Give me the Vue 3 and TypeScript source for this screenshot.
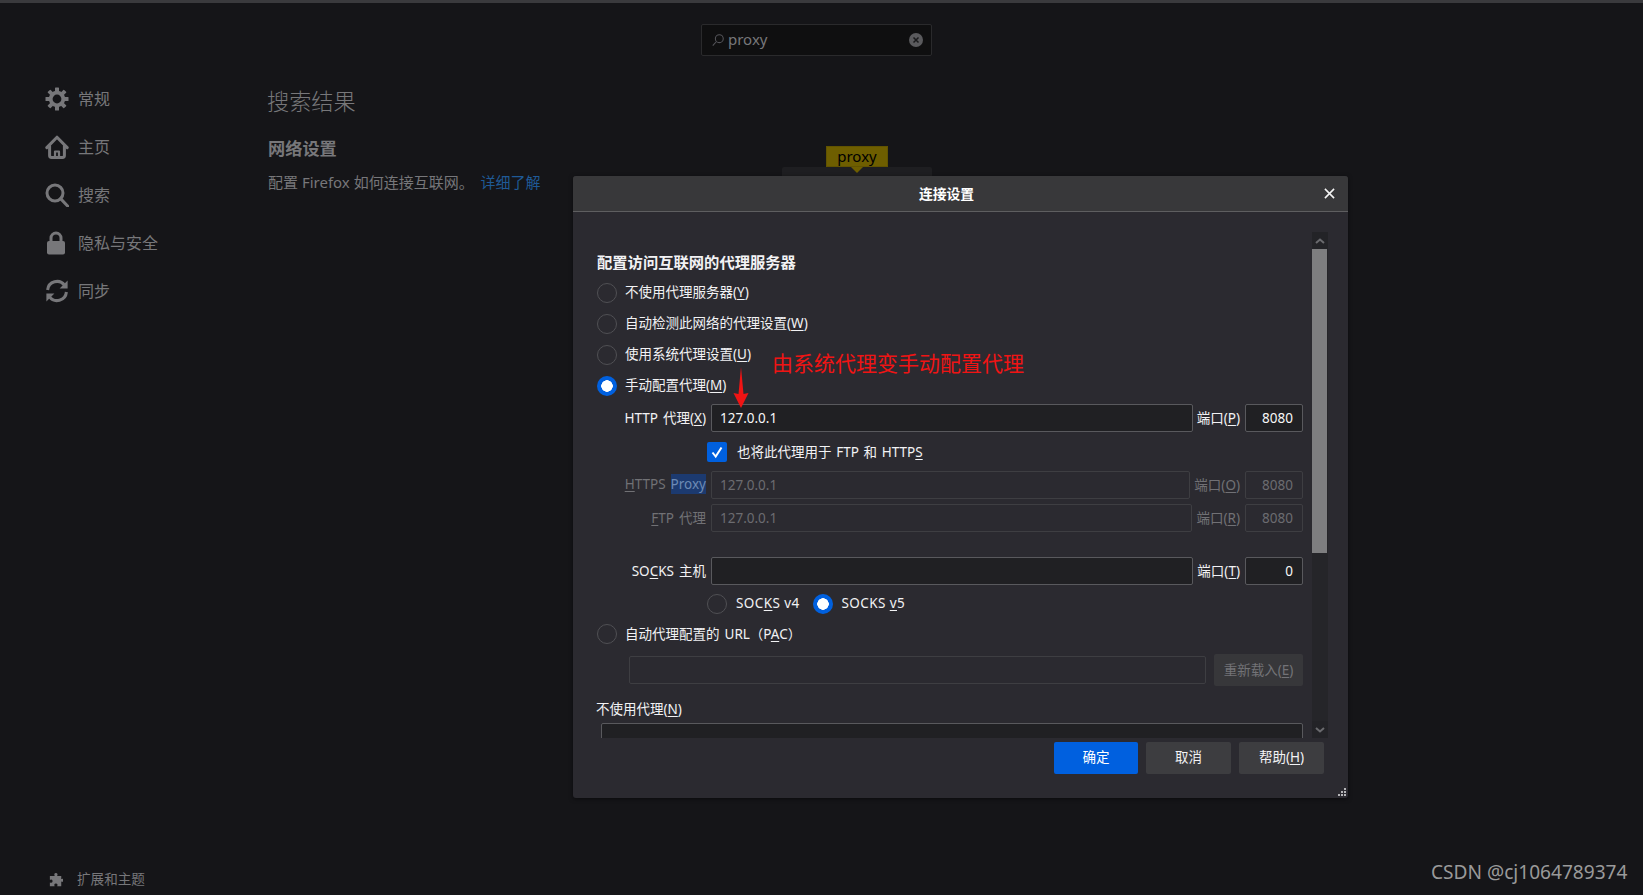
<script setup lang="ts">
import { ref } from 'vue';

interface NavItem {
  id: string;
  label: string;
}

const navItems: NavItem[] = [
  { id: 'gear', label: '常规' },
  { id: 'home', label: '主页' },
  { id: 'search', label: '搜索' },
  { id: 'lock', label: '隐私与安全' },
  { id: 'sync', label: '同步' },
];

const gearTeeth = [0, 45, 90, 135];
const searchText = ref('proxy');
</script>

<template>
  <div class="page">
    <div class="top-line"></div>
    <div class="columns">
      <aside class="sidebar">
        <nav class="nav">
          <div v-for="item in navItems" :key="item.id" class="nav-row">
            <svg class="nav-icon" viewBox="0 0 24 24">
              <g v-if="item.id === 'gear'" fill="#77777a">
                <rect
                  v-for="deg in gearTeeth"
                  :key="deg"
                  x="10"
                  y="0.5"
                  width="4"
                  height="23"
                  rx="0.6"
                  :transform="`rotate(${deg} 12 12)`"
                />
                <circle cx="12" cy="12" r="8.2" />
                <circle cx="12" cy="12" r="4.4" fill="#151518" />
              </g>
              <g v-else-if="item.id === 'home'" fill="none" stroke="#77777a" stroke-width="3" stroke-linecap="round" stroke-linejoin="round">
                <path d="M1.8 12.6 12 2.2l10.2 10.4" />
                <path d="M4.6 11v9.6q0 1.9 1.9 1.9h11q1.9 0 1.9-1.9V11" />
                <path d="M10 22v-5.5h4V22" stroke-width="2.2" />
              </g>
              <g v-else-if="item.id === 'search'" fill="none" stroke="#77777a" stroke-width="3">
                <circle cx="10" cy="10" r="8" />
                <path d="m15.6 15.6 7.2 7.6" stroke-linecap="round" />
              </g>
              <g v-else-if="item.id === 'lock'">
                <path d="M6 11V7a5 5 0 0 1 10 0v4" fill="none" stroke="#77777a" stroke-width="3" />
                <rect x="2" y="10" width="18" height="13.5" rx="2" fill="#77777a" />
              </g>
              <g v-else fill="none" stroke="#77777a" stroke-width="3">
                <path d="M2.6 11A9.4 9.4 0 0 1 19.6 6.4" />
                <path d="M21.4 13A9.4 9.4 0 0 1 4.4 17.6" />
                <path d="M22.6 1.6v8h-8z" fill="#77777a" stroke="none" />
                <path d="M1.4 22.4v-8h8z" fill="#77777a" stroke="none" />
              </g>
            </svg>
            <span>{{ item.label }}</span>
          </div>
        </nav>
        <div class="addons">
          <svg class="addons-icon" viewBox="0 0 16 16">
            <path
              fill="#77777a"
              d="M6 1.5a2 2 0 0 1 3.800 0c0 .9-.5 1.300-.5 2H14v3.400c.6 0 1-.4 1.600-.4a1.800 1.800 0 0 1 0 3.600c-.6 0-1-.4-1.600-.4V15H9.400c0-.7.4-1.100.4-1.700a2 2 0 0 0-3.800 0c0 .6.4 1 .4 1.700H1v-4.200c.7 0 1.100.4 1.700.4a2 2 0 0 0 0-3.800c-.6 0-1 .4-1.700.4V3.500h5.500c0-.7-.5-1.100-.5-2z"
            />
          </svg>
          <span>扩展和主题</span>
        </div>
      </aside>

      <main class="main">
        <div class="search-box">
          <svg class="search-glass" viewBox="0 0 16 16">
            <circle cx="9.5" cy="6.5" r="4.5" fill="none" stroke="#55555a" stroke-width="1.2" />
            <path d="M6 10 2 14.5" stroke="#55555a" stroke-width="1.2" />
          </svg>
          <span class="search-text">{{ searchText }}</span>
          <span class="search-clear">
            <svg viewBox="0 0 14 14">
              <circle cx="7" cy="7" r="7" fill="#5a5a5d" />
              <path d="m4.5 4.5 5 5m0-5-5 5" stroke="#1a1a1c" stroke-width="1.5" />
            </svg>
          </span>
        </div>
        <h1 class="result-title">搜索结果</h1>
        <h2 class="section-title">网络设置</h2>
        <p class="section-desc">配置 Firefox 如何连接互联网。 <a class="learn-more">详细了解</a></p>
      </main>
    </div>

    <div class="setting-btn"></div>
    <div class="spot">proxy<i class="spot-arrow"></i></div>

    <section class="dialog">
      <header class="dialog-head">
        <span class="dialog-title">连接设置</span>
        <span class="dialog-close">
          <svg viewBox="0 0 12 12"><path d="m1 1 10 10m0-10L1 11" stroke="#f4f4f4" stroke-width="1.7" /></svg>
        </span>
      </header>

      <div class="pane-wrap">
        <div class="pane">
          <h3 class="pane-title">配置访问互联网的代理服务器</h3>

          <label class="radio-row"><i class="radio"></i><span>不使用代理服务器(<u>Y</u>)</span></label>
          <label class="radio-row"><i class="radio"></i><span>自动检测此网络的代理设置(<u>W</u>)</span></label>
          <label class="radio-row"><i class="radio"></i><span>使用系统代理设置(<u>U</u>)</span></label>
          <label class="radio-row"><i class="radio on"></i><span>手动配置代理(<u>M</u>)</span></label>

          <div class="proxy-row http-row">
            <span class="proxy-label">HTTP 代理(<u>X</u>)</span>
            <div class="field">127.0.0.1</div>
            <span class="port-label">端口(<u>P</u>)</span>
            <div class="field port">8080</div>
          </div>

          <div class="check-row">
            <i class="check">
              <svg viewBox="0 0 20 20"><path d="m5.5 10.500 3.200 4 5.800-9" fill="none" stroke="#fff" stroke-width="2" /></svg>
            </i>
            <span>也将此代理用于 FTP 和 HTTP<u>S</u></span>
          </div>

          <div class="proxy-row off https-row">
            <span class="proxy-label"><u>H</u>TTPS <span class="found">Proxy</span></span>
            <div class="field">127.0.0.1</div>
            <span class="port-label">端口(<u>O</u>)</span>
            <div class="field port">8080</div>
          </div>

          <div class="proxy-row off ftp-row">
            <span class="proxy-label"><u>F</u>TP 代理</span>
            <div class="field">127.0.0.1</div>
            <span class="port-label">端口(<u>R</u>)</span>
            <div class="field port">8080</div>
          </div>

          <div class="proxy-row socks-row">
            <span class="proxy-label">SO<u>C</u>KS 主机</span>
            <div class="field"></div>
            <span class="port-label">端口(<u>T</u>)</span>
            <div class="field port">0</div>
          </div>

          <div class="socks-version">
            <label class="inline-radio"><i class="radio"></i><span>SOC<u>K</u>S v4</span></label>
            <label class="inline-radio"><i class="radio on"></i><span>SOCKS <u>v</u>5</span></label>
          </div>

          <label class="radio-row pac-row"><i class="radio"></i><span>自动代理配置的 URL（P<u>A</u>C）</span></label>

          <div class="pac-fields">
            <div class="field pac-input"></div>
            <div class="reload-btn">重新载入(<u>E</u>)</div>
          </div>

          <div class="no-proxy-label">不使用代理(<u>N</u>)</div>
          <div class="no-proxy-box"></div>
        </div>

        <div class="scrollbar">
          <div class="scroll-btn">
            <svg viewBox="0 0 10 6"><path d="m1 5 4-3.500L9 5" fill="none" stroke="#6a6a6e" stroke-width="2" /></svg>
          </div>
          <div class="scroll-thumb"></div>
          <div class="scroll-btn bottom">
            <svg viewBox="0 0 10 6"><path d="m1 1 4 3.500L9 1" fill="none" stroke="#6a6a6e" stroke-width="2" /></svg>
          </div>
        </div>
      </div>

      <footer class="dialog-foot">
        <button class="btn primary">确定</button>
        <button class="btn">取消</button>
        <button class="btn">帮助(<u>H</u>)</button>
      </footer>

      <div class="resizer">
        <i v-for="n in 6" :key="n"></i>
      </div>
    </section>

    <div class="note">由系统代理变手动配置代理</div>
    <svg class="note-arrow" viewBox="0 0 18 42">
      <path d="M9 0 11.500 27 16.500 26 9 41 1.500 26 6.500 27z" fill="#f01414" />
    </svg>

    <div class="watermark">CSDN @cj1064789374</div>
  </div>
</template>

<style>
html,
body {
  margin: 0;
  background: #151518;
}
</style>

<style scoped>
.page {
  position: relative;
  display: flex;
  flex-direction: column;
  height: 895px;
  overflow: hidden;
  background: #151518;
  color: #77777a;
  font-family: "Noto Sans", "Noto Sans CJK SC", sans-serif;
}

.top-line {
  flex: none;
  height: 3px;
  background: #3a3a3d;
}

.columns {
  flex: 1;
  display: flex;
  min-height: 0;
}

.sidebar {
  flex: none;
  width: 268px;
  display: flex;
  flex-direction: column;
  padding: 72px 0 0 45px;
  box-sizing: border-box;
}

.nav-row {
  display: flex;
  align-items: center;
  gap: 9px;
  height: 48px;
  font-size: 16px;
}

.nav-row span {
  margin-top: -2px;
}

.nav-icon {
  width: 24px;
  height: 24px;
  flex: none;
}

.addons {
  margin-top: auto;
  height: 30px;
  display: flex;
  align-items: center;
  gap: 14px;
  padding-left: 4px;
  font-size: 13.6px;
}

.addons span {
  margin-top: -4px;
}

.addons-icon {
  width: 14px;
  height: 14px;
}

.main {
  flex: 1;
  padding-top: 21px;
}

.search-box {
  display: flex;
  align-items: center;
  width: 231px;
  height: 32px;
  margin-left: 433px;
  padding: 0 8px 0 9px;
  box-sizing: border-box;
  background: #0f0f10;
  border: 1px solid #2a2a2c;
  border-radius: 2px;
}

.search-glass {
  width: 14px;
  height: 14px;
  flex: none;
}

.search-text {
  margin: -2px 0 0 3px;
  flex: 1;
  font-size: 15px;
  color: #77777a;
}

.search-clear svg {
  display: block;
  width: 14px;
  height: 14px;
}

.result-title {
  margin: 31px 0 2px -1px;
  font-size: 22.2px;
  line-height: 30px;
  font-weight: 300;
}

.section-title {
  margin: 20px 0 0;
  font-size: 17.2px;
  line-height: 24px;
  font-weight: 700;
}

.section-desc {
  margin: 10px 0 0;
  font-size: 15px;
  line-height: 22px;
  white-space: nowrap;
}

.learn-more {
  margin-left: 3px;
  color: #1f5a96;
}

.setting-btn {
  position: absolute;
  left: 782px;
  top: 167px;
  width: 150px;
  height: 12px;
  background: #1e1e21;
  border-radius: 2px;
}

.spot {
  position: absolute;
  left: 826px;
  top: 146px;
  width: 62px;
  height: 21px;
  box-sizing: border-box;
  background: #6e5e00;
  border: 1px solid #615300;
  color: #000;
  font-size: 15px;
  line-height: 18px;
  text-align: center;
}

.spot-arrow {
  position: absolute;
  left: 24px;
  top: 20px;
  border: 6px solid transparent;
  border-top-color: #6e5e00;
  border-bottom: 0;
}

.dialog {
  position: absolute;
  left: 573px;
  top: 176px;
  width: 775px;
  height: 622px;
  display: flex;
  flex-direction: column;
  background: #2b2a30;
  border-radius: 3px;
  box-shadow: 0 1px 4px rgba(0, 0, 0, 0.5);
  color: #f2f2f4;
  font-size: 13.5px;
}

.dialog-head {
  flex: none;
  position: relative;
  height: 35px;
  display: flex;
  align-items: center;
  justify-content: center;
  padding-right: 28px;
  background: #38383a;
  border-bottom: 1px solid #5e5e60;
  border-radius: 3px 3px 0 0;
}

.dialog-title {
  margin-top: -2px;
  font-size: 13.8px;
  font-weight: 700;
  color: #fff;
}

.dialog-close {
  position: absolute;
  right: 13px;
  top: 12px;
  width: 11px;
  height: 11px;
}

.dialog-close svg {
  display: block;
}

.pane-wrap {
  flex: none;
  display: flex;
  height: 506px;
  margin-top: 20px;
  padding-left: 24px;
  overflow: hidden;
}

.pane {
  flex: none;
  width: 706px;
  padding-top: 20px;
  box-sizing: border-box;
}

.pane-title {
  margin: 0;
  height: 25px;
  font-size: 15.3px;
  line-height: 20px;
  font-weight: 700;
  color: #f2f2f4;
}

.radio-row {
  display: flex;
  align-items: center;
  gap: 8px;
  height: 31px;
  white-space: nowrap;
}

.radio-row span,
.inline-radio span,
.check-row span {
  margin-top: -3px;
}

.radio {
  flex: none;
  width: 20px;
  height: 20px;
  box-sizing: border-box;
  border: 1px solid #505054;
  border-radius: 50%;
  background: #2b2a30;
}

.radio.on {
  border: 0;
  background: radial-gradient(circle, #fff 0 5.5px, #0060df 6px);
}

.proxy-row {
  display: flex;
  align-items: center;
  gap: 4px;
}

.proxy-label {
  flex: none;
  width: 109px;
  margin: -2px 1px 0 0;
  text-align: right;
  white-space: nowrap;
  word-spacing: 1.5px;
}

.field {
  flex: 1;
  min-width: 0;
  height: 28px;
  padding-left: 8px;
  box-sizing: border-box;
  background: #202023;
  border: 1px solid #59595d;
  border-radius: 2px;
  line-height: 26px;
  color: #f7f7f7;
}

.field.port {
  flex: none;
  width: 58px;
  margin-left: 1px;
  padding: 0 9px 0 0;
  text-align: right;
}

.port-label {
  flex: none;
  margin-top: -2px;
  white-space: nowrap;
}

.http-row {
  margin-top: 3px;
}

.check-row {
  display: flex;
  align-items: center;
  height: 20px;
  margin: 10px 0 0 110px;
  white-space: nowrap;
  word-spacing: 1.2px;
}

.check {
  flex: none;
  width: 20px;
  height: 20px;
  margin-right: 10px;
  background: #0060df;
  border-radius: 2px;
}

.check svg {
  display: block;
}

.off {
  color: #717175;
}

.off .field {
  background: #2b2a30;
  border-color: #3e3e42;
  color: #6c6c70;
}

.found {
  padding: 1px 0;
  background: #1c3a70;
  color: #6d8ab4;
}

.https-row {
  margin-top: 9px;
}

.ftp-row {
  margin-top: 5px;
}

.socks-row {
  margin-top: 25px;
}

.socks-version {
  display: flex;
  align-items: center;
  height: 20px;
  margin: 9px 0 0 110px;
  letter-spacing: 0.4px;
}

.inline-radio {
  display: flex;
  align-items: center;
  gap: 9px;
  margin-right: 13px;
  white-space: nowrap;
}

.pac-row {
  height: 20px;
  margin-top: 10px;
  word-spacing: 1.5px;
}

.pac-fields {
  display: flex;
  align-items: center;
  gap: 8px;
  margin: 10px 0 0 32px;
}

.pac-input {
  background: #2b2a30;
  border-color: #3e3e42;
}

.reload-btn {
  flex: none;
  width: 89px;
  height: 32px;
  background: #37373a;
  border-radius: 2px;
  color: #737377;
  line-height: 32px;
  text-align: center;
  white-space: nowrap;
}

.no-proxy-label {
  margin-top: 13px;
  margin-bottom: 4px;
  margin-left: -1px;
  line-height: 20px;
}

.no-proxy-box {
  height: 40px;
  margin: 4px 0 0 4px;
  box-sizing: border-box;
  background: #202023;
  border: 1px solid #59595d;
  border-radius: 2px;
}

.scrollbar {
  flex: none;
  display: flex;
  flex-direction: column;
  width: 16px;
  margin-left: 9px;
  background: #252529;
}

.scroll-btn {
  flex: none;
  display: flex;
  align-items: center;
  justify-content: center;
  height: 17px;
  padding-right: 1px;
  background: #232327;
}

.scroll-btn svg {
  width: 10px;
  height: 6px;
}

.scroll-btn.bottom {
  margin-top: auto;
}

.scroll-thumb {
  height: 304px;
  margin-right: 1px;
  background: #7e7e80;
}

.dialog-foot {
  flex: none;
  display: flex;
  justify-content: flex-end;
  gap: 8px;
  padding: 4px 24px 0 0;
}

.btn {
  width: 85px;
  height: 32px;
  padding: 0 0 5px;
  background: #3d3d40;
  border: 0;
  border-radius: 2px;
  color: #f2f2f4;
  font: inherit;
  white-space: nowrap;
}

.btn.primary {
  width: 84px;
  background: #0060df;
  color: #fff;
}

.resizer {
  position: absolute;
  right: 2px;
  bottom: 2px;
  display: grid;
  grid-template-columns: repeat(3, 2px);
  grid-template-rows: repeat(3, 2px);
  gap: 1px;
}

.resizer i {
  background: #b5b5b8;
}

.resizer i:nth-child(1) {
  grid-area: 1 / 3;
}

.resizer i:nth-child(2) {
  grid-area: 2 / 2;
}

.resizer i:nth-child(3) {
  grid-area: 2 / 3;
}

.resizer i:nth-child(4) {
  grid-area: 3 / 1;
}

.resizer i:nth-child(5) {
  grid-area: 3 / 2;
}

.resizer i:nth-child(6) {
  grid-area: 3 / 3;
}

.note {
  position: absolute;
  left: 772px;
  top: 348px;
  color: #f01414;
  font-size: 21px;
  line-height: 30px;
  white-space: nowrap;
}

.note-arrow {
  position: absolute;
  left: 732px;
  top: 367px;
  width: 18px;
  height: 42px;
}

.watermark {
  position: absolute;
  left: 1431px;
  top: 857px;
  color: #9a9a9a;
  font-size: 19.1px;
  line-height: 30px;
  white-space: nowrap;
}

u {
  text-underline-offset: 2px;
}
</style>
